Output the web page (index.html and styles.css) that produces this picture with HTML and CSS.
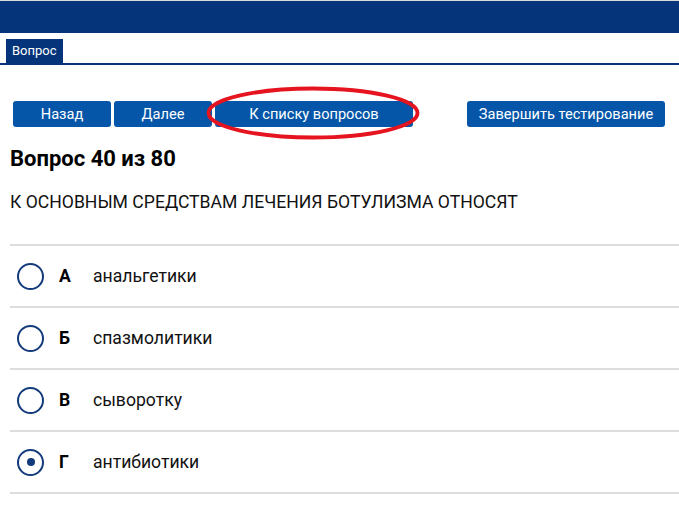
FILE: index.html
```html
<!DOCTYPE html>
<html lang="ru">
<head>
<meta charset="utf-8">
<title>Вопрос</title>
<link rel="stylesheet" href="styles.css">
</head>
<body>
<div class="topbar"></div>
<div class="tabs"><div class="tab">Вопрос</div></div>
<div class="toolbar">
  <button class="btn btn-sm">Назад</button>
  <button class="btn btn-sm">Далее</button>
  <button class="btn btn-lg">К списку вопросов</button>
  <button class="btn btn-lg btn-end">Завершить тестирование</button>
  <svg class="mark" width="214" height="54" viewBox="0 0 214 54"><ellipse cx="107" cy="27" rx="104.5" ry="24.5" fill="none" stroke="#e5141f" stroke-width="3.8"/></svg>
</div>
<h1 class="title">Вопрос 40 из 80</h1>
<p class="question">К ОСНОВНЫМ СРЕДСТВАМ ЛЕЧЕНИЯ БОТУЛИЗМА ОТНОСЯТ</p>
<div class="options">
  <div class="option"><span class="radio"></span><span class="letter">А</span><span class="text">анальгетики</span></div>
  <div class="option"><span class="radio"></span><span class="letter">Б</span><span class="text">спазмолитики</span></div>
  <div class="option"><span class="radio"></span><span class="letter">В</span><span class="text">сыворотку</span></div>
  <div class="option"><span class="radio checked"></span><span class="letter">Г</span><span class="text">антибиотики</span></div>
</div>
</body>
</html>
```
FILE: styles.css
```css
* { box-sizing: border-box; }
body {
  margin: 0;
  font-family: Roboto, "Liberation Sans", sans-serif;
  color: #111;
  background: #fff;
}
.topbar {
  height: 33px;
  border-top: 1px solid #dcdcdc;
  background: #05347a;
}
.tabs {
  height: 32px;
  display: flex;
  align-items: flex-end;
  padding-left: 6px;
  border-bottom: 2px solid #05347a;
}
.tab {
  height: 24px;
  line-height: 24px;
  padding: 0 6px;
  background: #05347a;
  color: #fff;
  font-size: 13px;
}
.toolbar {
  position: relative;
  display: flex;
  gap: 3px;
  margin-top: 36px;
  padding: 0 14px 0 13px;
}
.btn {
  height: 26px;
  border: 0;
  border-radius: 3px;
  background: #0556a8;
  color: #fff;
  font-family: Roboto, "Liberation Sans", sans-serif;
  font-size: 14.6px;
  padding: 0;
  cursor: pointer;
}
.btn-sm { width: 98px; }
.btn-lg { width: 198px; }
.btn-end { margin-left: auto; }
.mark {
  position: absolute;
  left: 206px;
  top: -15px;
  pointer-events: none;
}
.title {
  margin: 19px 0 0 10px;
  font-size: 22px;
  line-height: 26px;
  font-weight: 700;
  color: #000;
}
.question {
  margin: 19px 0 0 10px;
  font-size: 17.6px;
  line-height: 22px;
  color: #111;
}
.options {
  margin: 31px 0 0 10px;
}
.option {
  height: 62px;
  display: flex;
  align-items: center;
  border-top: 2px solid #dddddd;
}
.option:last-child {
  height: 64px;
  border-bottom: 2px solid #dddddd;
}
.radio {
  width: 27px;
  height: 27px;
  margin-left: 7px;
  border: 2.8px solid #133b7b;
  border-radius: 50%;
  display: flex;
  align-items: center;
  justify-content: center;
  flex: none;
}
.radio.checked::after {
  content: "";
  width: 8px;
  height: 8px;
  border-radius: 50%;
  background: #133b7b;
}
.letter {
  width: 34px;
  margin-left: 15px;
  font-size: 17.6px;
  font-weight: 700;
  color: #000;
}
.text {
  font-size: 17.6px;
  color: #111;
}
```
